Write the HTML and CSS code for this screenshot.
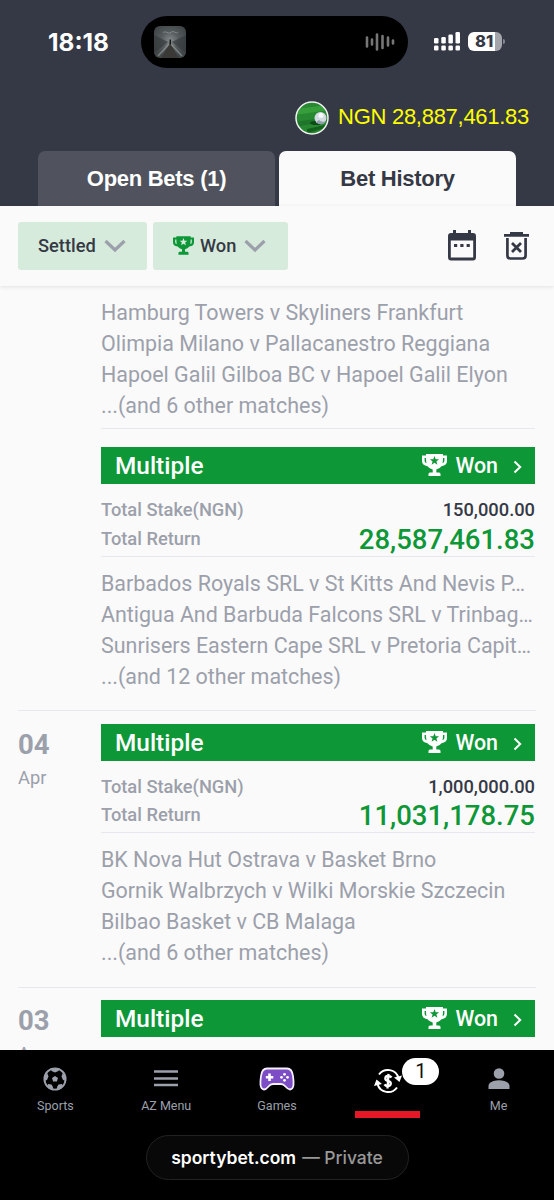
FILE: index.html
```html
<!DOCTYPE html>
<html lang="en">
<head>
  <meta charset="utf-8">
  <title>Bet History</title>
  <link rel="stylesheet" href="styles.css">
</head>
<body>
  <svg class="sprite">
    <symbol id="trophy" viewBox="0 0 25 22">
      <path fill="currentColor" fill-rule="evenodd" d="M4 0h17v1.500h4V7q0 4.300-5.500 5.300Q17.500 15 14.300 15.600V18.500H17q1.500 0 1.500 1.500v2h-12v-2q0-1.500 1.500-1.500h2.700v-2.900Q7.500 15 5.500 12.300 0 11.300 0 7V1.500h4zM2.600 4v3q0 1.600 1.900 2.300Q4 7.500 4 4zM22.400 4H21q0 3.500-.5 5.300 1.900-.7 1.900-2.300zM12.500 2l1.200 3.200 3.400.1-2.700 2.100 1 3.300-2.900-1.900-2.900 1.900 1-3.300-2.700-2.100 3.400-.1z"/>
    </symbol>
    <symbol id="chevron" viewBox="0 0 22 14">
      <path d="M1.500 2 11 11 20.500 2" fill="none" stroke="#9ca0ab" stroke-width="3.200"/>
    </symbol>
    <symbol id="arrow" viewBox="0 0 9 14">
      <path d="M1.500 1.500 7.200 7 1.500 12.500" fill="none" stroke="#fff" stroke-width="2"/>
    </symbol>
  </svg>

  <header class="header">
    <div class="status">
      <span class="time">18:18</span>
      <div class="island">
        <svg class="cover" viewBox="0 0 32 32">
          <defs>
            <radialGradient id="fog" cx=".5" cy=".45" r=".55">
              <stop offset="0" stop-color="#858b8b"/>
              <stop offset=".5" stop-color="#555b5c"/>
              <stop offset="1" stop-color="#414748"/>
            </radialGradient>
          </defs>
          <rect width="32" height="32" rx="6" fill="url(#fog)"/>
          <path d="M0 9 14 16 0 27zM32 9 18 16l14 11z" fill="#333839" opacity=".65"/>
          <path d="M16 17 7 32h18z" fill="#3b3937"/>
          <path d="M15 18 4 30M17 18l11 12" stroke="#929896" stroke-width="1.500" opacity=".7"/>
          <path d="M9 6.500q2-1.500 4 0t4-.2 4 0 3-.3" fill="none" stroke="#8a8f8f" stroke-width=".8"/>
          <path d="M16.300 13.500v5" stroke="#151717" stroke-width="1.500"/>
        </svg>
        <svg class="wave" viewBox="0 0 30 18">
          <path d="M2 4.500v9M7 6.500v5M12 1.500v15M17.500 3v12M23 4.500v8M28 7.500v3" stroke="#767676" stroke-width="2.600" stroke-linecap="round"/>
        </svg>
      </div>
      <svg class="signal" viewBox="0 0 27 19">
        <g fill="#fff">
          <rect x="0" y="6" width="4.500" height="5.500" rx="1.300"/>
          <rect x="7.300" y="5" width="4.500" height="6.500" rx="1.300"/>
          <rect x="14.400" y="2.500" width="4.500" height="9" rx="1.300"/>
          <rect x="21.500" y="0" width="4.500" height="11.500" rx="1.300"/>
          <rect x="0" y="13.500" width="4.500" height="5" rx="1.300"/>
          <rect x="7.300" y="13.500" width="4.500" height="5" rx="1.300"/>
          <rect x="14.400" y="13.500" width="4.500" height="5" rx="1.300"/>
          <rect x="21.500" y="13.500" width="4.500" height="5" rx="1.300"/>
        </g>
      </svg>
      <div class="battery">81</div>
    </div>

    <div class="balance">
      <svg class="avatar" viewBox="0 0 34 34">
        <defs>
          <clipPath id="round"><circle cx="17" cy="17" r="15.500"/></clipPath>
        </defs>
        <g clip-path="url(#round)">
          <rect width="34" height="34" fill="#288832"/>
          <path d="M0 8 34 4v5L0 14z" fill="#379e3c"/>
          <path d="M0 21 34 16v4L0 26z" fill="#1f752b"/>
          <path d="M12 28 34 23v3L12 32z" fill="#135f1c"/>
          <ellipse cx="21" cy="22" rx="6" ry="2" fill="#0e4a18"/>
          <circle cx="25.500" cy="17" r="6" fill="#d3dbe2"/>
          <path d="M21 21a6 6 0 0 0 10-1q-4 2-7-1z" fill="#929eaa"/>
          <circle cx="26" cy="14.500" r="2.500" fill="#f8fbfc"/>
        </g>
        <circle cx="17" cy="17" r="16" fill="none" stroke="#f2f5f2" stroke-width="1.500"/>
      </svg>
      <span class="amount">NGN 28,887,461.83</span>
    </div>

    <div class="tabs">
      <div class="tab">Open Bets (1)</div>
      <div class="tab active">Bet History</div>
    </div>
  </header>

  <div class="filters">
    <div class="filter settled"><span>Settled</span><svg class="down"><use href="#chevron"/></svg></div>
    <div class="filter result"><svg class="cup"><use href="#trophy"/></svg><span>Won</span><svg class="down"><use href="#chevron"/></svg></div>
    <svg class="calendar" viewBox="0 0 28 31">
      <path fill="#353945" fill-rule="evenodd" d="M5 0h3v3h12V0h3v3h2q3 0 3 3v21q0 3.500-3 3.500H3q-3 0-3-3.500V6q0-3 3-3h2zM2.800 10.500v17h22.400v-17z"/>
      <path fill="#353945" d="M6 14h3.200v3H6zM12.300 14h3.200v3h-3.200zM18.600 14h3.200v3h-3.200z"/>
    </svg>
    <svg class="trash" viewBox="0 0 26 28">
      <path fill="#353945" d="M0 2h6V0h13v2h6v2.800H0z"/>
      <path d="M3.400 6v17.500q0 3 3 3h12.200q3 0 3-3V6" fill="none" stroke="#353945" stroke-width="2.700"/>
      <path d="m8 11 9 9m0-9-9 9" stroke="#353945" stroke-width="2.800"/>
    </svg>
  </div>

  <main class="list">
    <section class="day first">
      <div class="date"></div>
      <div class="bets">
        <div class="matches cut">
          <p>Hamburg Towers v Skyliners Frankfurt</p>
          <p>Olimpia Milano v Pallacanestro Reggiana</p>
          <p>Hapoel Galil Gilboa BC v Hapoel Galil Elyon</p>
          <p>...(and 6 other matches)</p>
        </div>
        <div class="bar"><span class="type">Multiple</span><svg class="cup"><use href="#trophy"/></svg><span class="won">Won</span><svg class="arrow"><use href="#arrow"/></svg></div>
        <div class="totals">
          <div class="row"><span>Total Stake(NGN)</span><span class="stake">150,000.00</span></div>
          <div class="row"><span>Total Return</span><span class="return">28,587,461.83</span></div>
        </div>
        <div class="matches">
          <p>Barbados Royals SRL v St Kitts And Nevis P…</p>
          <p>Antigua And Barbuda Falcons SRL v Trinbag…</p>
          <p>Sunrisers Eastern Cape SRL v Pretoria Capit…</p>
          <p>...(and 12 other matches)</p>
        </div>
      </div>
    </section>

    <section class="day">
      <div class="date"><b>04</b><span>Apr</span></div>
      <div class="bets">
        <div class="bar"><span class="type">Multiple</span><svg class="cup"><use href="#trophy"/></svg><span class="won">Won</span><svg class="arrow"><use href="#arrow"/></svg></div>
        <div class="totals">
          <div class="row"><span>Total Stake(NGN)</span><span class="stake">1,000,000.00</span></div>
          <div class="row"><span>Total Return</span><span class="return">11,031,178.75</span></div>
        </div>
        <div class="matches">
          <p>BK Nova Hut Ostrava v Basket Brno</p>
          <p>Gornik Walbrzych v Wilki Morskie Szczecin</p>
          <p>Bilbao Basket v CB Malaga</p>
          <p>...(and 6 other matches)</p>
        </div>
      </div>
    </section>

    <section class="day">
      <div class="date"><b>03</b><span>Apr</span></div>
      <div class="bets">
        <div class="bar"><span class="type">Multiple</span><svg class="cup"><use href="#trophy"/></svg><span class="won">Won</span><svg class="arrow"><use href="#arrow"/></svg></div>
      </div>
    </section>
  </main>

  <footer class="footer">
    <nav class="nav">
      <div class="item">
        <svg viewBox="0 0 24 24" width="24" height="24">
          <circle cx="12" cy="12" r="10.600" fill="none" stroke="#9ca0ab" stroke-width="1.900"/>
          <path fill="#9ca0ab" d="m12 9 3 2.100-1.100 3.500h-3.800L9 11.100zM7.500 1.500h9L15.500 4 12 5.500 8.500 4zM1 9l3.500-2.500 1 3L4 13l-3 1zM23 9l-3.500-2.500-1 3L20 13l3 1zM5 17l3.500.5 1.500 2.500-.5 3L5 21zM19 17l-3.500.5L14 20l.5 3 4.500-2z"/>
        </svg>
        <span>Sports</span>
      </div>
      <div class="item">
        <svg viewBox="0 0 24 24" width="24" height="24">
          <path d="M0 4.500h24M0 11.500h24M0 18h24" stroke="#9ca0ab" stroke-width="2.600"/>
        </svg>
        <span>AZ Menu</span>
      </div>
      <div class="item">
        <svg viewBox="0 0 36 24" width="36" height="24">
          <path d="M8 1.500h20q5 0 6 7.500.8 6 .5 9-.5 4-3.500 4.500-2 0-4.500-3Q24.500 17 22 17h-8q-2.500 0-4.500 2.500-2.500 3-4.500 3-3-.5-3.500-4.500-.3-3 .5-9Q3 1.500 8 1.500z" fill="#7c4dc4" stroke="#f5effb" stroke-width="1.800"/>
          <path d="M10.500 6.500v7.500M6.800 10.300h7.500" stroke="#fff" stroke-width="2.600"/>
          <g fill="#fff"><circle cx="25.500" cy="7.300" r="1.400"/><circle cx="22.500" cy="10.300" r="1.400"/><circle cx="28.500" cy="10.300" r="1.400"/><circle cx="25.500" cy="13.300" r="1.400"/></g>
        </svg>
        <span>Games</span>
      </div>
      <div class="item open">
        <svg viewBox="0 0 28 26" width="28" height="26">
          <g fill="none" stroke="#fff" stroke-width="2">
            <path d="M5 6.500A11 11 0 0 1 24.500 10M23 19.500A11 11 0 0 1 3.500 16"/>
            <path d="M17.500 9.500Q16.500 8 14 8t-2.700 2.300Q11.300 12.500 14 13t2.800 2.600Q16.500 18 14 18t-3.500-1.700M14.500 5.800 13.500 20.500" stroke-width="2.300"/>
          </g>
          <path d="m20 9.500 8-2-2.500 6.500zM8 16l-8 2 2.500-6.500z" fill="#fff"/>
        </svg>
        <span class="badge">1</span>
        <i class="marker"></i>
      </div>
      <div class="item">
        <svg viewBox="0 0 24 24" width="24" height="24">
          <circle cx="12" cy="6.500" r="5.300" fill="#9ca0ab"/>
          <path d="M1.500 22v-3q0-3.500 5-5 5.500-1.400 11 0 5 1.500 5 5v3z" fill="#9ca0ab"/>
        </svg>
        <span>Me</span>
      </div>
    </nav>
    <div class="address"><b>sportybet.com</b><span>— Private</span></div>
  </footer>
</body>
</html>
```

FILE: styles.css
```css
* {
  box-sizing: border-box;
}

body {
  margin: 0;
  width: 554px;
  height: 1200px;
  overflow: hidden;
  display: flex;
  flex-direction: column;
  background-color: #fafafa;
  font-family: Roboto, sans-serif;
  color: #353945;
}

svg {
  display: block;
  flex: none;
}

.sprite {
  position: absolute;
  width: 0;
  height: 0;
}

/* header */
.header {
  height: 206px;
  flex: none;
  background-color: #353945;
  padding-top: 16px;
}

.status {
  display: flex;
  align-items: center;
  height: 52px;
  padding-left: 48px;
  color: #fff;
  font-family: Inter, sans-serif;
}

.time {
  width: 93px;
  font-size: 24.4px;
  font-weight: 700;
  line-height: 30px;
}

.island {
  width: 267px;
  height: 52px;
  border-radius: 26px;
  background-color: #000;
  display: flex;
  align-items: center;
  justify-content: space-between;
  padding: 0 13px;
}

.cover {
  width: 32px;
  height: 32px;
}

.wave {
  width: 30px;
  height: 18px;
}

.signal {
  width: 27px;
  height: 19px;
  margin: 0 7px 2px 26px;
}

.battery {
  width: 34px;
  height: 19px;
  margin-bottom: 2px;
  border-radius: 6px;
  background: linear-gradient(to right, #fff 27px, #a3a5aa 27px);
  color: #353945;
  font-size: 16.5px;
  font-weight: 800;
  line-height: 19px;
  padding-left: 7px;
  position: relative;
}

.battery::after {
  content: "";
  position: absolute;
  right: -3px;
  top: 7px;
  width: 2px;
  height: 5px;
  border-radius: 0 3px 3px 0;
  background-color: #85888f;
}

.balance {
  display: flex;
  align-items: center;
  justify-content: flex-end;
  gap: 9px;
  height: 34px;
  margin-top: 33px;
  padding-right: 25px;
}

.avatar {
  width: 34px;
  height: 34px;
}

.amount {
  color: #ff0;
  font-family: "Liberation Sans", Arial, sans-serif;
  font-size: 22px;
  letter-spacing: -0.28px;
  line-height: 30px;
  margin-bottom: 3px;
}

.tabs {
  display: flex;
  gap: 4px;
  margin: 16px 38px 0 38px;
  height: 55px;
}

.tab {
  width: 237px;
  border-radius: 7px 7px 0 0;
  background-color: #50535e;
  color: #fff;
  font-family: "Liberation Sans", Arial, sans-serif;
  font-size: 22px;
  letter-spacing: -0.28px;
  font-weight: 700;
  line-height: 56px;
  text-align: center;
}

.tab.active {
  background-color: #fafafa;
  color: #353945;
}

/* filters */
.filters {
  height: 80px;
  flex: none;
  display: flex;
  align-items: center;
  padding: 0 24px 1px 18px;
  box-shadow: 0 1px 4px rgba(0, 0, 0, 0.1);
  position: relative;
}

.filter {
  height: 48px;
  border-radius: 3px;
  background-color: #d7ebdc;
  display: flex;
  align-items: center;
  font-size: 18.3px;
  font-weight: 500;
}

.settled {
  width: 129px;
  padding-left: 20px;
  margin-right: 6px;
}

.result {
  width: 135px;
  padding-left: 20px;
}

.result .cup {
  width: 21px;
  height: 19px;
  margin-right: 6px;
  color: #0d9737;
}

.down {
  width: 22px;
  height: 14px;
  margin-left: 8px;
}

.calendar {
  width: 28px;
  height: 31px;
  margin-left: auto;
}

.trash {
  width: 26px;
  height: 28px;
  margin-left: 28px;
}

/* bet list */
.list {
  flex: 1;
  min-height: 0;
  overflow: hidden;
  padding: 0 18px;
}

.day {
  display: grid;
  grid-template-columns: 83px 434px;
  border-top: 1px solid #e7e8ef;
  padding-top: 12.5px;
}

.day.first {
  border-top: none;
  padding-top: 0;
}

.date {
  color: #9ca0ab;
  font-size: 18.3px;
  line-height: 26px;
}

.date b {
  display: block;
  font-size: 27.5px;
  line-height: 41px;
}

.bar {
  display: flex;
  align-items: center;
  height: 37px;
  background-color: #0d9737;
  color: #fff;
  padding: 0 13px 0 14px;
  font-weight: 500;
}

.type {
  font-size: 24.4px;
  flex: 1;
}

.bar .cup {
  width: 25px;
  height: 22px;
  margin-bottom: 1px;
}

.won {
  font-size: 21.4px;
  margin-left: 8px;
}

.arrow {
  width: 9px;
  height: 14px;
  margin-left: 15px;
  margin-top: 3px;
}

.totals {
  padding: 11.5px 0 3px;
  border-bottom: 1px solid #e7e8ef;
}

.row {
  display: flex;
  justify-content: space-between;
  align-items: center;
  height: 28.5px;
  color: #9ca0ab;
  font-size: 18.3px;
  font-weight: 500;
}

.return {
  color: #0d9737;
  font-size: 27.5px;
  padding-top: 2px;
}

.row .stake {
  color: #353945;
}

.matches {
  padding: 11px 0 18.5px;
  color: #9ca0ab;
  font-size: 21.45px;
  line-height: 31px;
}

.matches.cut {
  padding-bottom: 6.5px;
  border-bottom: 1px solid #e7e8ef;
  margin-bottom: 18.5px;
}

.matches p {
  margin: 0;
  white-space: nowrap;
}

/* bottom */
.footer {
  height: 150px;
  flex: none;
  background-color: #000;
}

.nav {
  display: flex;
  height: 85px;
}

.item {
  flex: 1;
  display: flex;
  flex-direction: column;
  align-items: center;
  padding-top: 17px;
  color: #9ca0ab;
  font-size: 12.5px;
  position: relative;
}

.item span {
  margin-top: 7px;
}

.item.open {
  padding-top: 18px;
}

.item .badge {
  position: absolute;
  left: 70px;
  top: 7.5px;
  margin: 0;
  width: 37px;
  height: 27px;
  border-radius: 14px;
  background-color: #fff;
  color: #111;
  font-size: 20px;
  line-height: 27px;
  text-align: center;
}

.marker {
  width: 65px;
  height: 7px;
  margin-top: 17px;
  background-color: #e41827;
}

.address {
  display: flex;
  align-items: center;
  justify-content: center;
  gap: 6px;
  width: 263px;
  height: 45px;
  margin: 0 auto;
  border: 1px solid #222;
  border-radius: 23px;
  background-color: #080808;
  color: #999;
  font-family: Inter, sans-serif;
  font-size: 17.5px;
  font-weight: 500;
}

.address b {
  color: #fff;
  font-weight: 600;
}
```
